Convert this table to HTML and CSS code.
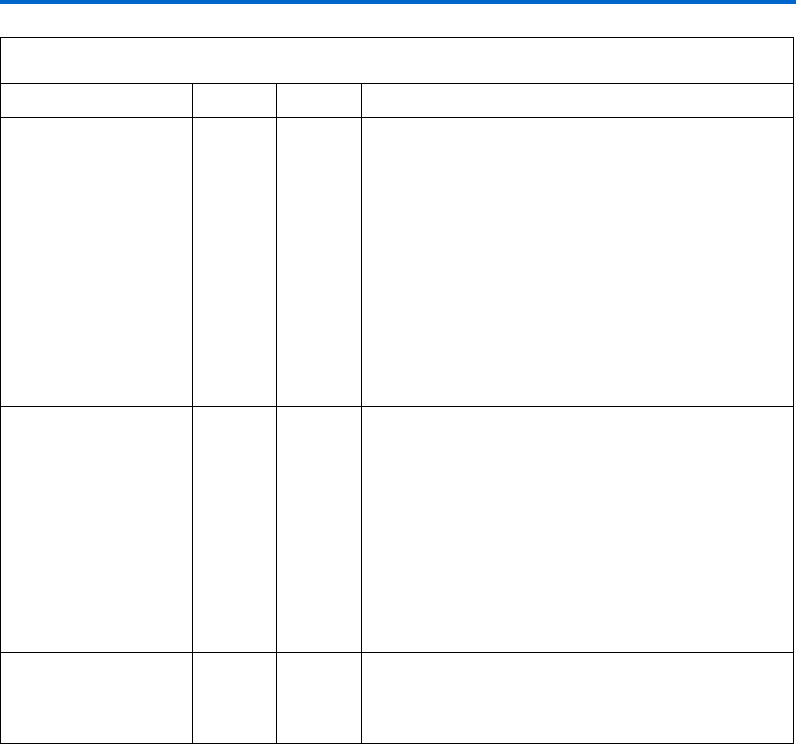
FILE: index.html
```html
<!DOCTYPE html>
<html>
<head>
<meta charset="utf-8">
<link rel="stylesheet" href="styles.css">
</head>
<body>
<div class="topbar"></div>
<div class="table">
  <div class="cell caption"></div>
  <div class="cell head"></div>
  <div class="cell head"></div>
  <div class="cell head"></div>
  <div class="cell head"></div>
  <div class="cell r1"></div>
  <div class="cell r1"></div>
  <div class="cell r1"></div>
  <div class="cell r1"></div>
  <div class="cell r2"></div>
  <div class="cell r2"></div>
  <div class="cell r2"></div>
  <div class="cell r2"></div>
  <div class="cell r3"></div>
  <div class="cell r3"></div>
  <div class="cell r3"></div>
  <div class="cell r3"></div>
</div>
</body>
</html>
```
FILE: styles.css
```css
html, body {
  margin: 0;
  padding: 0;
  background: #ffffff;
  font-family: "Liberation Sans", Arial, sans-serif;
}
.topbar {
  height: 4px;
  background: #0066cc;
}
.table {
  margin-top: 33px;
  width: 792px;
  border: 1px solid #000;
  background: #000;
  display: grid;
  grid-template-columns: 191px 83px 84px 431px;
  grid-template-rows: 45px 33px 288px 245px 90px;
  gap: 1px;
}
.cell {
  background: #fff;
}
.caption {
  grid-column: 1 / -1;
}
```
